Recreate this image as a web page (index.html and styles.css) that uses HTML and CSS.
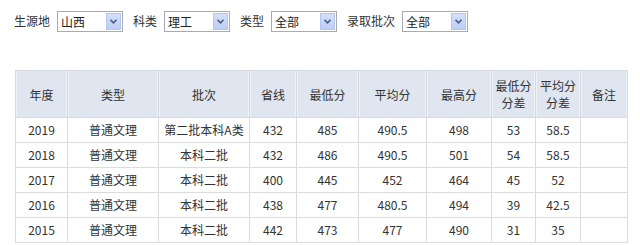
FILE: index.html
```html
<!DOCTYPE html>
<html lang="zh">
<head>
<meta charset="utf-8">
<link rel="stylesheet" href="styles.css">
</head>
<body>
<div class="filters">
  <span class="lbl">生源地</span>
  <span class="sel"><span class="val">山西</span><span class="btn"><svg width="7" height="5" viewBox="0 0 7 5"><path d="M0.5 0.8 L3.5 3.8 L6.5 0.8" fill="none" stroke="#4d6185" stroke-width="1.6"/></svg></span></span>
  <span class="lbl">科类</span>
  <span class="sel"><span class="val">理工</span><span class="btn"><svg width="7" height="5" viewBox="0 0 7 5"><path d="M0.5 0.8 L3.5 3.8 L6.5 0.8" fill="none" stroke="#4d6185" stroke-width="1.6"/></svg></span></span>
  <span class="lbl">类型</span>
  <span class="sel"><span class="val">全部</span><span class="btn"><svg width="7" height="5" viewBox="0 0 7 5"><path d="M0.5 0.8 L3.5 3.8 L6.5 0.8" fill="none" stroke="#4d6185" stroke-width="1.6"/></svg></span></span>
  <span class="lbl">录取批次</span>
  <span class="sel"><span class="val">全部</span><span class="btn"><svg width="7" height="5" viewBox="0 0 7 5"><path d="M0.5 0.8 L3.5 3.8 L6.5 0.8" fill="none" stroke="#4d6185" stroke-width="1.6"/></svg></span></span>
</div>
<table class="score">
  <colgroup>
    <col class="c52"><col class="c91"><col class="c91"><col class="c47"><col class="c62"><col class="c68"><col class="c65"><col class="c44"><col class="c45"><col class="c47">
  </colgroup>
  <thead>
    <tr><th>年度</th><th>类型</th><th>批次</th><th>省线</th><th>最低分</th><th>平均分</th><th>最高分</th><th>最低分<br>分差</th><th>平均分<br>分差</th><th>备注</th></tr>
  </thead>
  <tbody>
    <tr><td>2019</td><td>普通文理</td><td>第二批本科A类</td><td>432</td><td>485</td><td>490.5</td><td>498</td><td>53</td><td>58.5</td><td></td></tr>
    <tr><td>2018</td><td>普通文理</td><td>本科二批</td><td>432</td><td>486</td><td>490.5</td><td>501</td><td>54</td><td>58.5</td><td></td></tr>
    <tr><td>2017</td><td>普通文理</td><td>本科二批</td><td>400</td><td>445</td><td>452</td><td>464</td><td>45</td><td>52</td><td></td></tr>
    <tr><td>2016</td><td>普通文理</td><td>本科二批</td><td>438</td><td>477</td><td>480.5</td><td>494</td><td>39</td><td>42.5</td><td></td></tr>
    <tr><td>2015</td><td>普通文理</td><td>本科二批</td><td>442</td><td>473</td><td>477</td><td>490</td><td>31</td><td>35</td><td></td></tr>
  </tbody>
</table>
</body>
</html>
```
FILE: styles.css
```css
html, body {
  margin: 0;
  padding: 0;
  background: #fff;
}
body {
  font-family: "Noto Sans CJK SC", "Noto Sans", sans-serif;
  font-size: 12px;
  color: #333;
}
.filters {
  display: flex;
  align-items: center;
  padding: 10px 0 0 14px;
  height: 22px;
}
.lbl {
  line-height: 20px;
  margin-right: 7px;
}
.sel {
  display: flex;
  align-items: stretch;
  width: 64px;
  height: 19px;
  border: 1px solid #a5acb5;
  margin-right: 10px;
  background: #fff;
}
.val {
  flex: 1;
  line-height: 19px;
  padding-left: 3px;
  color: #222;
}
.btn {
  width: 15px;
  margin: 1px;
  background: linear-gradient(#d4e0fb, #bccdf6);
  border: 1px solid #b6c6ea;
  display: flex;
  align-items: center;
  justify-content: center;
  box-sizing: border-box;
}
.score {
  margin: 38px 0 0 15px;
  border-collapse: collapse;
  table-layout: fixed;
  width: 612px;
}
.c52 { width: 52px; }
.c91 { width: 91px; }
.c47 { width: 47px; }
.c62 { width: 62px; }
.c68 { width: 68px; }
.c65 { width: 65px; }
.c44 { width: 44px; }
.c45 { width: 45px; }
.score th {
  background: #dfe6ef;
  font-weight: normal;
  height: 46px;
  line-height: 17px;
  padding: 0;
  border: 1px solid #d4dae2;
  box-shadow: inset 1px 0 0 #eef2f7, inset -1px 0 0 #eef2f7;
  text-align: center;
  color: #333;
}
.score td {
  height: 24px;
  padding: 0;
  border: 1px solid #dcdcdc;
  text-align: center;
  line-height: 24px;
}
```
